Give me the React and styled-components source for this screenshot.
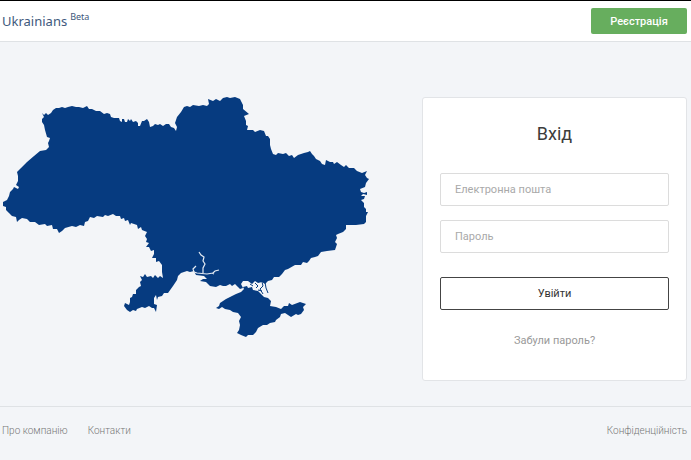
import React, { useState } from "react";
import styled, { createGlobalStyle } from "styled-components";

const footerLinks = [
  { id: "about", label: "Про компанію" },
  { id: "contacts", label: "Контакти" },
];

const App = () => {
  const [email, setEmail] = useState("");
  const [password, setPassword] = useState("");

  return (
    <>
      <GlobalStyle />
      <Header>
        <Logo href="#">
          Ukrainians<Beta>Beta</Beta>
        </Logo>
        <SignupBtn type="button">Реєстрація</SignupBtn>
      </Header>
      <Main>
        <UkraineMap />
        <LoginForm onSubmit={(e) => e.preventDefault()}>
          <Title>Вхід</Title>
          <Field
            type="email"
            placeholder="Електронна пошта"
            aria-label="Електронна пошта"
            value={email}
            onChange={(e) => setEmail(e.target.value)}
          />
          <Field
            type="password"
            placeholder="Пароль"
            aria-label="Пароль"
            value={password}
            onChange={(e) => setPassword(e.target.value)}
          />
          <LoginBtn type="submit">Увійти</LoginBtn>
          <ForgotLink href="#">Забули пароль?</ForgotLink>
        </LoginForm>
      </Main>
      <Footer>
        <FooterNav>
          {footerLinks.map((link) => (
            <FooterLink key={link.id} href={`#${link.id}`}>
              {link.label}
            </FooterLink>
          ))}
        </FooterNav>
        <FooterLink href="#privacy">Конфіденційність</FooterLink>
      </Footer>
    </>
  );
};

export default App;

const UkraineMap = () => (
  <MapSvg viewBox="2 97 368 241" role="img" aria-label="Україна">
    {/* Mainland */}
    <path
      fill="#063b80"
      d="M42 113L44 115L46 113L48 115L51 113L53 110L56 108L59 108L62 107L65 108L68 107L72 106L76 107L79 107L83 108L87 106L89 109L92 109L96 111L100 111L104 114L107 113L110 114L111 117L114 118L119 118L120 121L122 122L122 119L124 119L125 122L127 122L128 119L130 121L131 119L133 122L136 121L138 123L138 126L140 126L142 121L144 121L147 119L149 122L150 127L153 126L155 124L158 125L160 124L163 126L166 124L169 124L171 127L174 128L176 131L177 127L175 123L177 117L181 112L184 107L187 106L190 107L193 105L199 106L203 105L207 106L209 104L208 99L213 101L216 99L220 101L223 98L227 97L230 98L235 97L240 99L243 105L243 109L249 114L244 116L246 121L246 125L248 126L247 130L253 130L255 132L260 130L264 131L266 136L268 136L270 139L270 145L271 149L273 154L276 155L278 153L283 154L286 153L289 156L292 155L294 158L298 155L304 153L308 152L310 151L312 154L314 156L316 159L320 161L322 164L325 165L326 160L330 162L333 162L334 164L337 162L341 165L344 167L346 165L349 168L354 168L357 171L362 173L367 171L365 175L367 178L369 179L366 183L365 187L360 189L361 192L364 193L367 192L367 195L363 194L361 196L365 196L364 199L361 200L364 203L364 207L366 209L366 212L368 212L366 216L366 222L364 224L356 225L346 225L346 229L343 232L338 234L336 235L337 238L335 242L337 244L335 250L327 251L321 252L318 256L315 257L311 258L309 261L307 263L303 262L301 265L295 265L288 269L285 270L282 274L279 277L274 277L272 280L268 281L265 284L262 282L258 283L255 281L252 284L248 281L243 281L241 284L243 288L240 289L238 287L235 284L232 286L230 284L226 286L223 286L220 285L216 287L210 286L206 282L200 281L203 279L207 279L204 276L196 275L194 271L190 272L187 271L181 273L178 276L177 280L173 286L168 293L164 293L162 296L158 297L157 300L156 295L154 298L154 304L157 305L156 312L154 308L152 308L149 306L145 308L142 307L137 309L136 311L133 310L130 312L127 310L124 306L125 303L129 305L130 302L130 298L132 297L133 294L136 294L136 290L139 287L141 286L140 282L142 280L140 276L143 277L145 274L147 277L151 276L153 278L155 275L158 278L160 276L163 278L162 272L162 265L159 261L156 262L156 258L152 258L154 254L154 250L151 251L149 247L146 247L149 243L146 242L147 239L145 236L147 232L142 230L141 227L138 229L137 225L131 223L130 225L128 220L125 221L124 218L121 219L120 216L116 216L113 214L108 216L105 215L103 217L97 216L94 218L90 217L88 221L85 222L84 226L80 225L76 227L72 226L65 228L62 231L59 233L57 229L53 229L52 225L47 226L45 224L39 225L35 222L30 222L27 219L22 218L19 220L17 222L16 217L12 216L9 213L6 210L6 207L3 206L3 202L7 200L9 196L10 192L13 189L14 187L18 189L19 187L16 185L18 181L18 176L17 172L21 168L27 162L34 156L40 151L46 150L49 147L48 143L49 141L50 138L47 137L45 130L44 125L42 122L42 119L44 117Z"
    />
    {/* Crimea */}
    <path
      fill="#063b80"
      d="M216 308L219 306L220 303L226 299L232 296L236 294L241 292L244 289L243 287L247 286L248 288L252 287L253 290L258 291L260 293L264 297L268 298L271 301L270 306L276 307L281 309L284 306L288 306L289 303L292 305L300 302L306 304L303 307L304 310L301 314L298 315L296 314L291 317L288 315L285 313L281 314L280 317L276 320L275 322L270 323L267 325L263 325L258 328L256 332L253 335L248 335L246 337L241 335L237 333L239 330L240 325L239 321L241 317L238 313L233 312L230 310L225 309L222 307L219 309Z"
    />
    {/* Syvash spits */}
    <path
      d="M255 283L258 286L256 288M262 282L263 286L260 289L263 294M265 282L266 288L268 293M250 284L253 286M258 290L262 291"
      fill="none"
      stroke="#063b80"
      strokeWidth="1"
    />
    {/* Dnipro estuary */}
    <path
      d="M194 272L197 273L207 274L213 273L215 271L219 270M212 273L214 274M203 273L203 268L205 264L203 261L204 257L201 255L199 252M194 272L193 269L196 266"
      fill="none"
      stroke="#e4ebf3"
      strokeWidth="1.2"
    />
  </MapSvg>
);

const GlobalStyle = createGlobalStyle`
  * {
    box-sizing: border-box;
  }

  body {
    margin: 0;
    background-color: #f3f5f8;
    font-family: Roboto, "Noto Sans", sans-serif;
  }
`;

const Header = styled.header`
  display: flex;
  justify-content: space-between;
  align-items: center;
  height: 42px;
  padding: 0 4px 0 2px;
  border-top: 1px solid #000;
  border-bottom: 1px solid #dfe2e5;
  background-color: #fff;
`;

const Logo = styled.a`
  display: flex;
  align-items: flex-start;
  color: #40597c;
  font-family: "Noto Sans", sans-serif;
  font-size: 13px;
  line-height: 20px;
  text-decoration: none;
`;

const Beta = styled.span`
  margin-left: 3px;
  font-size: 9px;
  line-height: 12px;
`;

const SignupBtn = styled.button`
  width: 96px;
  height: 26px;
  padding: 0;
  border: none;
  border-radius: 2px;
  background-color: #67ae5e;
  color: #fff;
  font-family: inherit;
  font-size: 11px;
  font-weight: 500;
  cursor: pointer;
`;

const Main = styled.main`
  display: grid;
  grid-template-columns: minmax(0, 368px) 265px;
  justify-content: space-between;
  align-items: start;
  padding: 55px 4px 25px 2px;
`;

const MapSvg = styled.svg`
  display: block;
  width: 100%;
  height: auto;
`;

const LoginForm = styled.form`
  display: flex;
  flex-direction: column;
  padding: 24px 17px 31px;
  border: 1px solid #e2e4e7;
  border-radius: 3px;
  background-color: #fff;
`;

const Title = styled.h1`
  margin: 0 0 27px;
  color: #3c3c3c;
  font-size: 18px;
  font-weight: 400;
  line-height: 24px;
  text-align: center;
`;

const Field = styled.input`
  width: 100%;
  height: 33px;
  margin-bottom: 14px;
  padding: 0 14px;
  border: 1px solid #dcdcdc;
  border-radius: 2px;
  background-color: #fff;
  color: #3c3c3c;
  font-family: inherit;
  font-size: 11px;

  &::placeholder {
    color: #a9a9a9;
    opacity: 1;
  }
`;

const LoginBtn = styled.button`
  height: 33px;
  margin: 10px 0 23px;
  border: 1px solid #444;
  border-radius: 2px;
  background-color: #fff;
  color: #333;
  font-family: inherit;
  font-size: 11px;
  cursor: pointer;
`;

const ForgotLink = styled.a`
  align-self: center;
  color: #999;
  font-size: 11px;
  line-height: 16px;
  text-decoration: none;
`;

const Footer = styled.footer`
  display: flex;
  justify-content: space-between;
  padding: 16px 4px 16px 2px;
  border-top: 1px solid #dfe2e5;
`;

const FooterNav = styled.nav`
  display: flex;
  gap: 20px;
`;

const FooterLink = styled.a`
  color: #777;
  font-size: 10px;
  font-weight: 300;
  line-height: 16px;
  text-decoration: none;
`;
